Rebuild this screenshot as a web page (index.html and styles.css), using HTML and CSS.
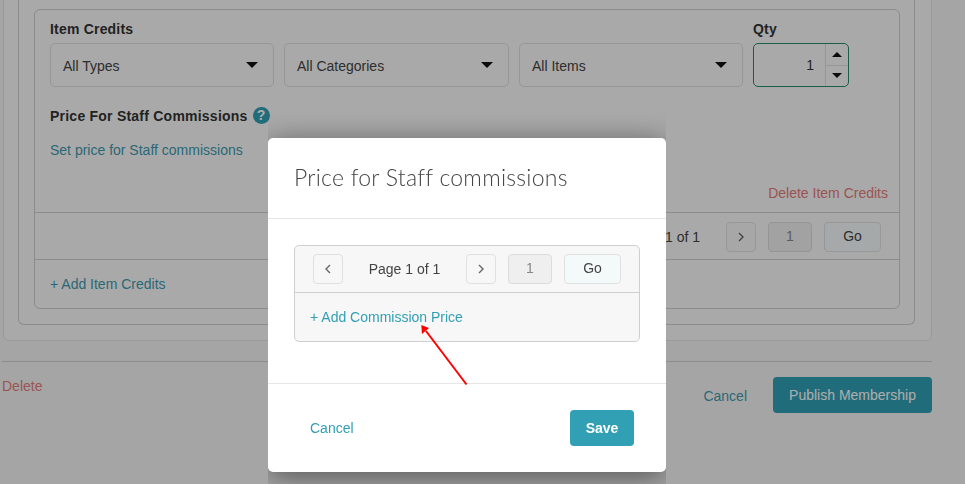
FILE: index.html
```html
<!DOCTYPE html>
<html lang="en">
<head>
    <meta charset="UTF-8">
    <meta name="viewport" content="width=device-width, initial-scale=1.0">
    <title>Price for Staff commissions</title>
    <link rel="stylesheet" href="styles.css">
</head>
<body>
    <div class="page">
        <div class="card outer">
            <div class="card middle">
                <div class="card inner">
                    <div class="inner-body">
                        <div class="filters">
                            <div class="field">
                                <label class="label">Item Credits</label>
                                <div class="select">All Types<span class="caret"></span></div>
                            </div>
                            <div class="field">
                                <label class="label">&nbsp;</label>
                                <div class="select select-wide">All Categories<span class="caret"></span></div>
                            </div>
                            <div class="field">
                                <label class="label">&nbsp;</label>
                                <div class="select">All Items<span class="caret"></span></div>
                            </div>
                            <div class="field">
                                <label class="label">Qty</label>
                                <div class="qty">
                                    <span class="qty-value">1</span>
                                    <div class="qty-spin">
                                        <span class="spin-btn"><span class="caret caret-up"></span></span>
                                        <span class="spin-btn"><span class="caret"></span></span>
                                    </div>
                                </div>
                            </div>
                        </div>
                        <div class="commission-head">
                            <span class="label">Price For Staff Commissions</span>
                            <span class="help">?</span>
                        </div>
                        <a class="link set-price">Set price for Staff commissions</a>
                        <div class="delete-row"><a class="danger">Delete Item Credits</a></div>
                    </div>
                    <div class="pager-row">
                        <div class="pager">
                            <span class="pager-text">Page 1 of 1</span>
                            <span class="pager-btn">
                                <svg class="chev" viewBox="0 0 8 12"><path d="M2 2l4 4-4 4"/></svg>
                            </span>
                            <span class="pager-input">1</span>
                            <span class="pager-go">Go</span>
                        </div>
                    </div>
                    <div class="add-row"><a class="link">+ Add Item Credits</a></div>
                </div>
            </div>
        </div>
        <div class="page-actions">
            <a class="danger page-delete">Delete</a>
            <div class="page-actions-right">
                <a class="link">Cancel</a>
                <span class="btn-publish">Publish Membership</span>
            </div>
        </div>
    </div>

    <div class="backdrop"></div>

    <div class="modal">
        <div class="modal-head">Price for Staff commissions</div>
        <div class="modal-body">
            <div class="panel">
                <div class="pager pager-modal">
                    <span class="pager-btn">
                        <svg class="chev" viewBox="0 0 8 12"><path d="M6 2L2 6l4 4"/></svg>
                    </span>
                    <span class="pager-text">Page 1 of 1</span>
                    <span class="pager-btn">
                        <svg class="chev" viewBox="0 0 8 12"><path d="M2 2l4 4-4 4"/></svg>
                    </span>
                    <span class="pager-input">1</span>
                    <span class="pager-go">Go</span>
                </div>
                <div class="panel-add"><a class="link-modal">+ Add Commission Price</a></div>
            </div>
        </div>
        <div class="modal-foot">
            <a class="link-modal">Cancel</a>
            <span class="btn-save">Save</span>
        </div>
    </div>

    <svg class="arrow" viewBox="0 0 60 70">
        <path d="M48.5 61.5L8 8"/>
        <polygon points="3.3,2 4,11 11,5"/>
    </svg>
</body>
</html>
```

FILE: styles.css
```css
html, body {
    height: 100%;
}
body {
    margin: 0;
    background: #f4f4f4;
    font-family: 'Liberation Sans', Arial, sans-serif;
    font-size: 14px;
    color: #333;
    overflow: hidden;
}
a {
    text-decoration: none;
}
.page {
    padding: 0 33px 0 3px;
}
.card {
    background: #f9f9f9;
    border: 1px solid #cecece;
    border-radius: 6px;
}
.outer {
    margin-top: -30px;
    padding: 0 16px 15px 14px;
    border-color: #e2e2e2;
    height: 371px;
    box-sizing: border-box;
}
.middle {
    height: 354px;
    padding: 38px 14px 15px 15px;
    box-sizing: border-box;
    border-top: none;
    border-radius: 0 0 6px 6px;
}
.inner {
    height: 300px;
    box-sizing: border-box;
}
.inner-body {
    padding: 10px 11px 0 15px;
    height: 203px;
    box-sizing: border-box;
    border-bottom: 1px solid #cecece;
}
.filters {
    display: flex;
    gap: 10px;
}
.field {
    display: flex;
    flex-direction: column;
}
.label {
    display: block;
    font-weight: 700;
    color: #333;
    line-height: 18px;
    height: 23px;
    letter-spacing: 0.2px;
}
.select {
    box-sizing: border-box;
    width: 224px;
    height: 44px;
    padding: 1px 12px 0;
    border: 1px solid #dedede;
    border-radius: 5px;
    display: flex;
    align-items: center;
    justify-content: space-between;
    color: #444;
}
.select-wide {
    width: 225px;
}
.caret {
    width: 0;
    height: 0;
    margin-right: 3px;
    margin-bottom: 1px;
    border-left: 6px solid transparent;
    border-right: 6px solid transparent;
    border-top: 6px solid #111;
}
.caret-up {
    border-top: none;
    border-bottom: 6px solid #111;
}
.qty {
    box-sizing: border-box;
    width: 96px;
    height: 44px;
    border: 1px solid #2a8a66;
    border-radius: 5px;
    display: flex;
    justify-content: space-between;
    align-items: center;
}
.qty-value {
    flex: 1;
    text-align: right;
    padding-right: 11px;
}
.qty-spin {
    width: 22px;
    height: 100%;
    display: flex;
    flex-direction: column;
    border-left: 1px solid #dedede;
}
.spin-btn {
    flex: 1;
    display: flex;
    align-items: center;
    justify-content: center;
}
.spin-btn + .spin-btn {
    border-top: 1px solid #dedede;
}
.spin-btn .caret {
    margin: 0;
    border-left-width: 5px;
    border-right-width: 5px;
    border-top-width: 5px;
}
.spin-btn .caret-up {
    border-bottom-width: 5px;
    border-top-width: 0;
}
.commission-head {
    display: flex;
    align-items: flex-start;
    gap: 5px;
    margin-top: 20px;
}
.commission-head .label {
    letter-spacing: 0.23px;
}
.help {
    width: 17px;
    height: 17px;
    border-radius: 50%;
    background: #2f9fb4;
    color: #fff;
    font-weight: 700;
    font-size: 14px;
    line-height: 17px;
    text-align: center;
}
.link {
    color: #3f9aae;
}
.set-price {
    display: block;
    margin-top: 12px;
}
.danger {
    color: #e57c78;
}
.delete-row {
    margin-top: 27px;
    text-align: right;
}
.pager-row {
    height: 47px;
    border-bottom: 1px solid #cecece;
    box-sizing: border-box;
    padding: 9px 18px 0 0;
    display: flex;
    justify-content: flex-end;
}
.pager {
    display: flex;
    align-items: center;
    gap: 12px;
}
.pager-row .pager {
    height: 30px;
}
.pager-row .pager-text {
    margin-right: 14px;
}
.pager-btn {
    box-sizing: border-box;
    flex-shrink: 0;
    width: 30px;
    height: 30px;
    border: 1px solid #e0e0e0;
    border-radius: 4px;
    display: flex;
    align-items: center;
    justify-content: center;
    background: #f7f7f7;
}
.chev {
    width: 8px;
    height: 12px;
    fill: none;
    stroke: #666;
    stroke-width: 1.4;
}
.pager-input {
    box-sizing: border-box;
    flex-shrink: 0;
    width: 44px;
    height: 30px;
    border: 1px solid #dcdcdc;
    border-radius: 4px;
    background: #efefef;
    color: #888;
    text-align: center;
    line-height: 27px;
}
.pager-go {
    box-sizing: border-box;
    flex-shrink: 0;
    width: 57px;
    height: 30px;
    border: 1px solid #e0e0e0;
    border-radius: 4px;
    background: #f4faf9;
    text-align: center;
    line-height: 27px;
    color: #444;
}
.pager-text {
    color: #444;
}
.add-row {
    padding: 16px 15px;
}
.page-actions {
    display: flex;
    justify-content: space-between;
    align-items: flex-start;
    margin: 20px 0 0 -1px;
    padding-top: 15px;
    border-top: 1px solid #cecece;
}
.page-delete {
    margin-top: 1px;
}
.page-actions-right {
    display: flex;
    align-items: center;
    gap: 26px;
}
.page-actions-right .link {
    margin-top: 2px;
}
.btn-publish {
    box-sizing: border-box;
    width: 159px;
    height: 36px;
    border-radius: 4px;
    background: #319fb4;
    color: #fff;
    text-align: center;
    line-height: 36px;
}
.backdrop {
    position: fixed;
    inset: 0;
    background: rgba(0, 0, 0, 0.32);
}
.modal {
    position: fixed;
    left: 268px;
    top: 138px;
    width: 398px;
    height: 334px;
    background: #fff;
    border-radius: 5px;
    box-shadow: 0 5px 30px rgba(0, 0, 0, 0.5);
    clip-path: inset(-30px 0 -30px 0);
    display: flex;
    flex-direction: column;
}
.modal-head {
    height: 81px;
    box-sizing: border-box;
    padding: 25px 26px 0;
    font-family: Lato, sans-serif;
    font-weight: 300;
    font-size: 23px;
    letter-spacing: 0.25px;
    line-height: 28px;
    color: #444;
    border-bottom: 1px solid #e6e6e6;
}
.modal-body {
    height: 165px;
    box-sizing: border-box;
    padding: 26px 26px 0;
    border-bottom: 1px solid #e6e6e6;
}
.panel {
    box-sizing: border-box;
    height: 97px;
    border: 1px solid #cfcfcf;
    border-radius: 5px;
    background: #f7f7f7;
}
.pager-modal {
    height: 47px;
    box-sizing: border-box;
    border-bottom: 1px solid #cfcfcf;
    padding: 0 18px;
}
.pager-modal .pager-text {
    width: 99px;
    text-align: center;
}
.panel-add {
    padding: 16px 15px;
}
.link-modal {
    color: #319fb4;
}
.modal-foot {
    flex: 1;
    display: flex;
    align-items: center;
    justify-content: space-between;
    padding: 0 32px 0 42px;
}
.btn-save {
    box-sizing: border-box;
    width: 64px;
    height: 36px;
    border-radius: 4px;
    background: #319fb4;
    color: #fff;
    font-weight: 700;
    text-align: center;
    line-height: 36px;
}
.arrow {
    position: fixed;
    left: 418px;
    top: 323px;
    width: 60px;
    height: 70px;
    overflow: visible;
}
.arrow path {
    fill: none;
    stroke: #f00;
    stroke-width: 2;
}
.arrow polygon {
    fill: #f00;
}
```
